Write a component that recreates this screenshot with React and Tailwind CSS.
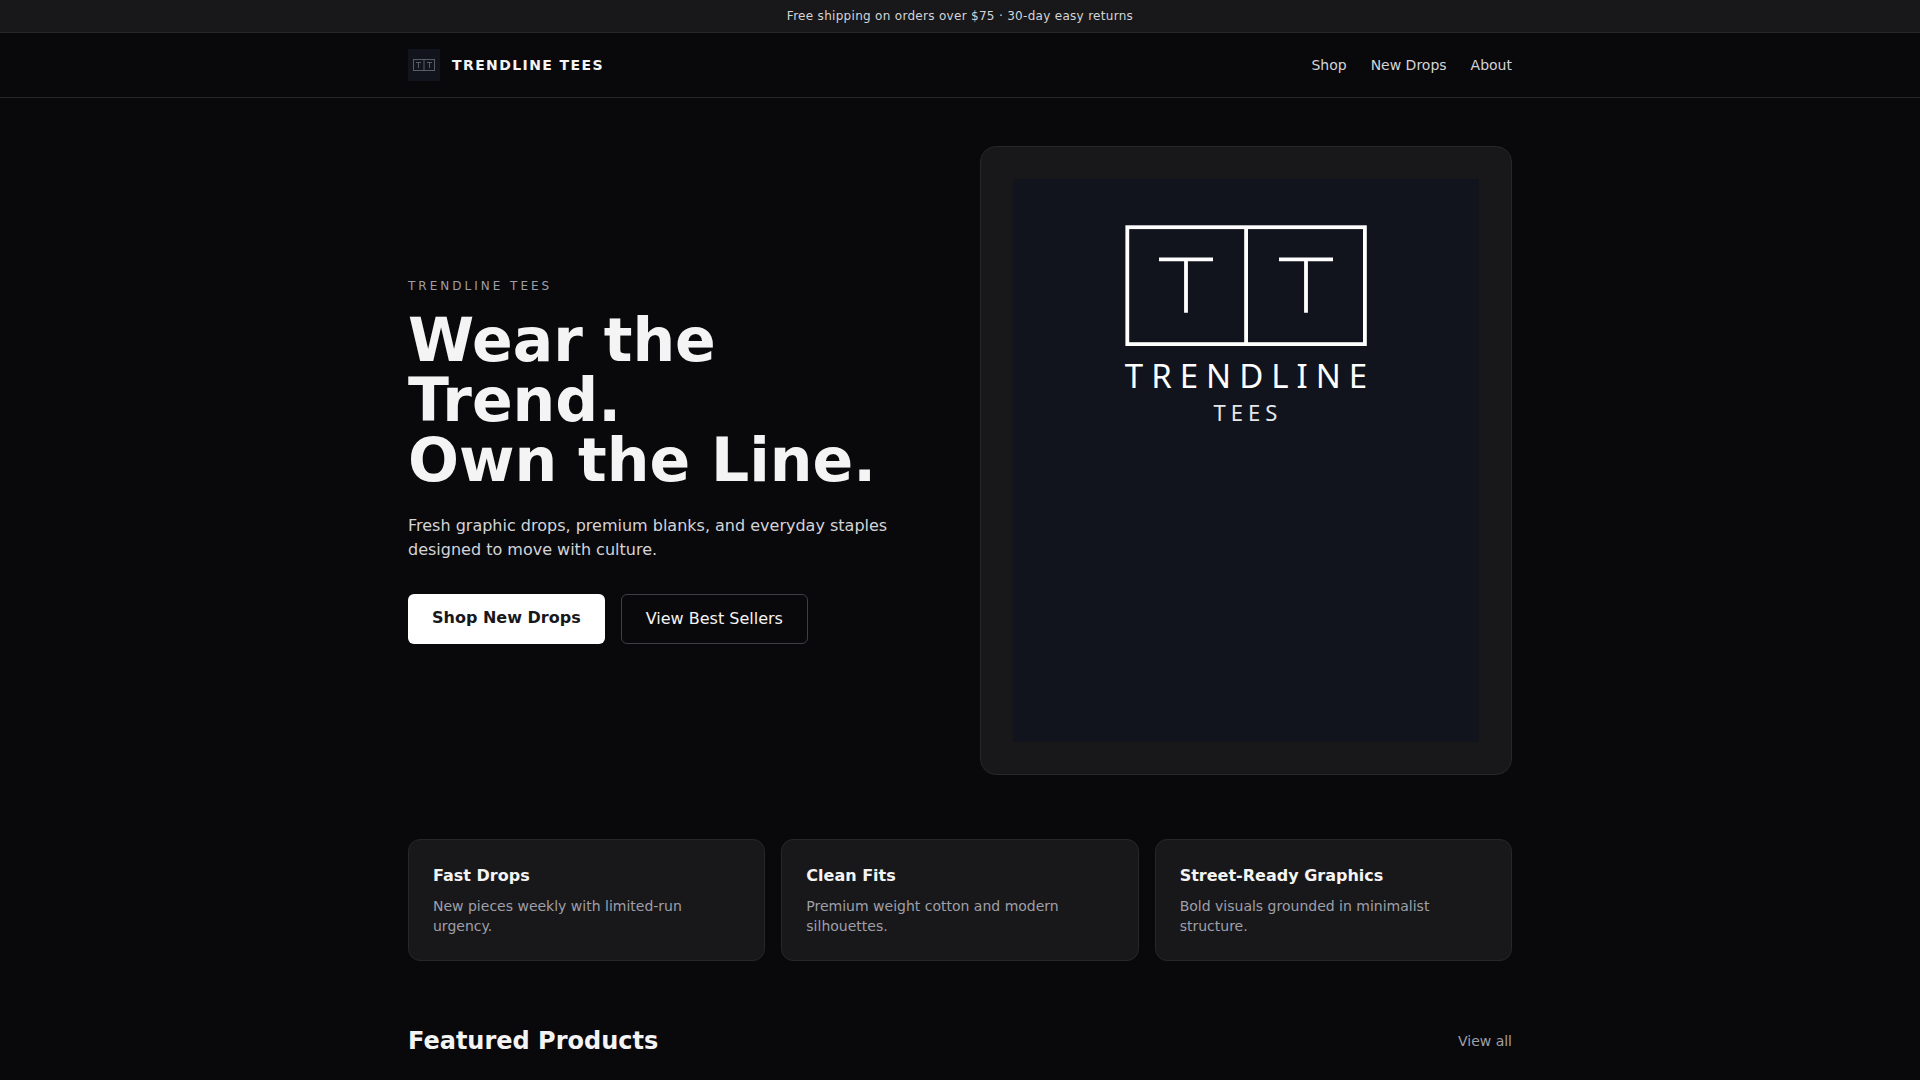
const navLinks = [
  { label: 'Shop', href: '#shop' },
  { label: 'New Drops', href: '#new' },
  { label: 'About', href: '#about' },
]

const features = [
  { title: 'Fast Drops', text: 'New pieces weekly with limited-run urgency.' },
  { title: 'Clean Fits', text: 'Premium weight cotton and modern silhouettes.' },
  { title: 'Street-Ready Graphics', text: 'Bold visuals grounded in minimalist structure.' },
]

function LogoMark() {
  return (
    <svg viewBox="0 0 32 32" className="h-8 w-8" fill="none" stroke="#5b5d66" aria-hidden="true">
      <rect width="32" height="32" fill="#11141d" stroke="none" />
      <rect x="5.5" y="10.5" width="21" height="11" />
      <path d="M16 10.5v11M8 13.5h5M10.5 13.5v5.5M19 13.5h5M21.5 13.5v5.5" />
    </svg>
  )
}

function HeroLogo() {
  return (
    <svg viewBox="0 0 466 563" className="w-full" role="img" aria-label="Trendline Tees logo">
      <rect width="466" height="563" fill="#11141d" />
      <g fill="none" stroke="#fff" strokeWidth="3.8">
        <rect x="114.3" y="48.2" width="237.6" height="116.9" />
        <path d="M233.1 48.2v117M146 80.3h54M173 80.3v53.4M266 80.3h54M293 80.3v53.4" />
      </g>
      <g fill="#fff" fontFamily="'Noto Sans', sans-serif" textAnchor="middle">
        <text x="237" y="209" fontSize="33" letterSpacing="8">TRENDLINE</text>
        <text x="235" y="242" fontSize="22" letterSpacing="5" fill="#e5e7eb">TEES</text>
      </g>
    </svg>
  )
}

export default function App() {
  return (
    <div className="min-h-screen bg-[#09090b] font-['DejaVu_Sans',sans-serif] text-zinc-100">
      <div className="border-b border-zinc-800 bg-[#18181a] py-2 text-center text-xs tracking-wide text-zinc-300">
        Free shipping on orders over $75 · 30-day easy returns
      </div>

      <header className="border-b border-zinc-800">
        <div className="mx-auto flex max-w-6xl items-center justify-between px-6 py-4">
          <a href="#home" className="flex items-center gap-3">
            <LogoMark />
            <span className="text-sm font-bold tracking-widest">TRENDLINE TEES</span>
          </a>
          <nav className="flex gap-6 text-sm text-zinc-300">
            {navLinks.map((link) => (
              <a key={link.label} href={link.href} className="hover:text-white">
                {link.label}
              </a>
            ))}
          </nav>
        </div>
      </header>

      <main className="mx-auto max-w-6xl px-6">
        {/* Hero */}
        <section className="grid items-center gap-10 pt-12 pb-16 md:grid-cols-2">
          <div>
            <p className="text-xs tracking-[0.25em] text-zinc-400 uppercase">Trendline Tees</p>
            <h1 className="mt-4 text-6xl leading-none font-bold">
              Wear the Trend.
              <br />
              Own the Line.
            </h1>
            <p className="mt-6 text-zinc-300">
              Fresh graphic drops, premium blanks, and everyday staples designed to move with culture.
            </p>
            <div className="mt-8 flex flex-wrap gap-4">
              <a href="#new" className="rounded-md bg-white px-6 py-3 font-semibold text-zinc-900">
                Shop New Drops
              </a>
              <a href="#best" className="rounded-md border border-zinc-700 px-6 py-3">
                View Best Sellers
              </a>
            </div>
          </div>

          <div className="rounded-2xl border border-zinc-800 bg-[#18181a] p-8">
            <HeroLogo />
          </div>
        </section>

        {/* Features */}
        <section className="grid gap-4 pb-16 md:grid-cols-3">
          {features.map((feature) => (
            <div key={feature.title} className="rounded-xl border border-zinc-800 bg-[#18181a] p-6">
              <h3 className="font-semibold">{feature.title}</h3>
              <p className="mt-2 text-sm text-zinc-400">{feature.text}</p>
            </div>
          ))}
        </section>

        {/* Featured products */}
        <section className="flex items-center justify-between">
          <h2 className="text-2xl font-bold">Featured Products</h2>
          <a href="#all" className="text-sm text-zinc-400 hover:text-white">
            View all
          </a>
        </section>
      </main>
    </div>
  )
}
